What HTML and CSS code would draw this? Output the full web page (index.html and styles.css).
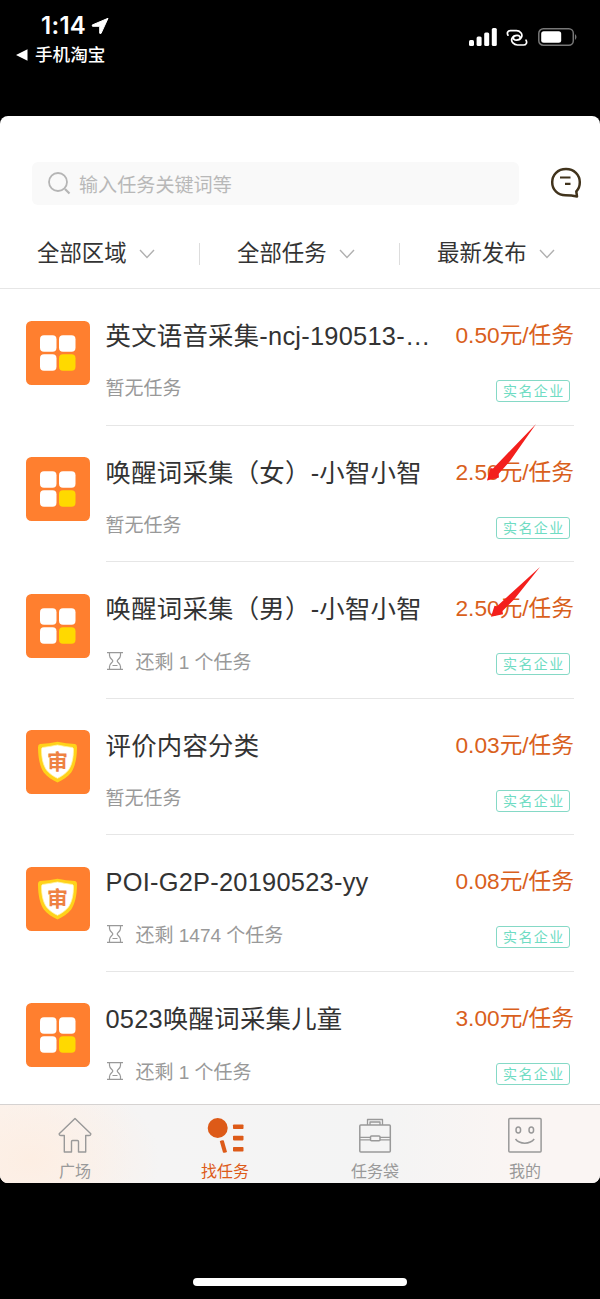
FILE: index.html
```html
<!DOCTYPE html>
<html lang="zh-CN">
<head>
<meta charset="utf-8">
<title>找任务</title>
<link rel="stylesheet" href="styles.css">
</head>
<body>
<svg class="sprite" width="0" height="0">
  <symbol id="i-grid" viewBox="0 0 64 64">
    <rect width="64" height="64" rx="5.5" fill="#ff7f2f"/>
    <rect x="14" y="14.3" width="16.5" height="16.5" rx="4" fill="#fff"/>
    <rect x="33" y="14.3" width="16.5" height="16.5" rx="4" fill="#fff"/>
    <rect x="14" y="33.3" width="16.5" height="16.5" rx="4" fill="#fff"/>
    <rect x="33" y="33.3" width="16.5" height="16.5" rx="4" fill="#ffd900"/>
  </symbol>
  <symbol id="i-shield" viewBox="0 0 64 64">
    <rect width="64" height="64" rx="5.5" fill="#ff7f2f"/>
    <path d="M14 14Q23 13.500 31.500 11.800Q40 13.500 49 14Q51.200 14.500 51 18C50.800 29 49 36.500 45.200 42.500C42 47 36.500 50 31.500 52.600C26.500 50 21 47 17.800 42.500C14 36.500 12.200 29 12 18Q11.800 14.500 14 14Z" fill="#ffd21a"/>
    <path d="M16.500 17.500Q24 16.500 31.500 15Q39 16.500 46.500 17.500Q47.500 17.800 47.500 20C47.300 29 45.800 35 42.500 40C39.700 43.800 35.500 46.300 31.500 48.300C27.500 46.300 23.300 43.800 20.500 40C17.200 35 15.700 29 15.500 20Q15.500 17.800 16.500 17.500Z" fill="#fff" stroke="#fff6a8" stroke-width=".8"/>
    <text x="31.500" y="38.500" text-anchor="middle" class="shield-text">审</text>
  </symbol>
  <symbol id="i-glass" viewBox="0 0 18 20">
    <path d="M1 1.700H17M1 18.300H17M3.500 2V4.500C3.500 7.500 6.800 8.500 6.800 10S3.500 12.500 3.500 15.500V18M14.500 2V4.500C14.500 7.500 11.200 8.500 11.200 10S14.500 12.500 14.500 15.500V18M6.500 14.500H11.500" fill="none" stroke="#999" stroke-width="1.200"/>
  </symbol>
  <symbol id="i-down" viewBox="0 0 16 10">
    <path d="M1 1L8 8.500L15 1" fill="none" stroke="#b0b0b0" stroke-width="1.400"/>
  </symbol>
  <symbol id="i-pointer" viewBox="0 0 52 60" preserveAspectRatio="none">
    <path d="M51 1L21 32L8 45.500L5.500 45L2 57.500L14 54.500L13.500 51L25 38Z" fill="#f31f1c"/>
  </symbol>
</svg>

<header class="status">
  <div class="status-left">
    <div class="clock"><span>1:14</span>
      <svg width="18" height="18" viewBox="0 0 18 18"><path d="M17 1.300L10 16.500L8.700 16.300V9.300H1.500L1.200 8Z" fill="#fff" stroke="#fff" stroke-width="1" stroke-linejoin="round"/></svg>
    </div>
    <div class="back">
      <svg width="12" height="12" viewBox="0 0 12 12"><path d="M0 6L11.500 .3V11.700Z" fill="#fff"/></svg>
      <span>手机淘宝</span>
    </div>
  </div>
  <div class="status-right">
    <svg width="28" height="18" viewBox="0 0 28 18" fill="#fff"><rect x="0" y="12" width="5" height="6" rx="1.500"/><rect x="7.600" y="8.500" width="5" height="9.500" rx="1.500"/><rect x="15.200" y="4.500" width="5" height="13.500" rx="1.500"/><rect x="22.800" y="0" width="5" height="18" rx="1.500"/></svg>
    <svg class="link" width="22" height="18" viewBox="0 0 22 18" fill="none" stroke="#fff" stroke-width="1.700" stroke-linecap="round"><path d="M2 6.200C.5 3.700 2 1.600 4.500 1.600H10.500C14 1.600 17 5 15.500 8.200C14.600 10.300 13 11.200 10.500 11.200C8.300 11.200 7 10 7.500 8.500"/><path d="M20 11.200C21.500 13.800 20 16 17.500 16H11.500C8 16 4.500 12.600 6 9.400C7 7.300 8.500 6.400 11 6.400C13.200 6.400 14.500 7.500 14 9"/></svg>
    <svg width="40" height="18" viewBox="0 0 40 18"><rect x=".8" y=".8" width="34.500" height="16.400" rx="4.500" fill="none" stroke="#777" stroke-width="1.500"/><rect x="3.200" y="3.200" width="20" height="11.600" rx="2.500" fill="#fff"/><path d="M37 6Q40 9 37 12Z" fill="#777"/></svg>
  </div>
</header>

<main class="app">
  <div class="search-row">
    <div class="search">
      <svg width="24" height="24" viewBox="0 0 24 24" fill="none" stroke="#b5b5b5" stroke-width="1.800"><circle cx="10" cy="10" r="9"/><path d="M17 17L21.500 21.500" stroke-width="2.200"/></svg>
      <span>输入任务关键词等</span>
    </div>
    <svg class="chat" width="32" height="32" viewBox="0 0 32 32" fill="none" stroke="#41331c" stroke-width="2.500" stroke-linejoin="round"><path d="M16 2C7.800 2 2.200 7.800 2.200 15.300C2.200 23 8 28.300 15.500 28.300C19 28.300 22.500 28.500 27 29.500L26.300 24.500C28.800 22 29.800 18.700 29.800 15.300C29.800 7.800 24 2 16 2Z"/><path d="M10 10.500H20.500M15 16.800H20.500" stroke-width="2.200"/></svg>
  </div>
  <div class="filters">
    <div class="filter">全部区域<svg width="16" height="10"><use href="#i-down"/></svg></div>
    <div class="filter">全部任务<svg width="16" height="10"><use href="#i-down"/></svg></div>
    <div class="filter">最新发布<svg width="16" height="10"><use href="#i-down"/></svg></div>
  </div>

  <div class="list">
    <div class="row">
      <svg class="icon" width="64" height="64"><use href="#i-grid"/></svg>
      <div class="body">
        <div class="line"><div class="title">英文语音采集-ncj-190513-…</div><div class="price">0.50元/任务</div></div>
        <div class="line"><div class="sub">暂无任务</div><div class="tag">实名企业</div></div>
      </div>
    </div>
    <div class="row">
      <svg class="icon" width="64" height="64"><use href="#i-grid"/></svg>
      <div class="body">
        <div class="line"><div class="title">唤醒词采集（女）-小智小智</div><div class="price">2.50元/任务</div></div>
        <div class="line"><div class="sub">暂无任务</div><div class="tag">实名企业</div></div>
      </div>
      <svg class="pointer pointer-a" width="52" height="60"><use href="#i-pointer"/></svg>
    </div>
    <div class="row">
      <svg class="icon" width="64" height="64"><use href="#i-grid"/></svg>
      <div class="body">
        <div class="line"><div class="title">唤醒词采集（男）-小智小智</div><div class="price">2.50元/任务</div></div>
        <div class="line"><div class="sub left"><svg width="18" height="20"><use href="#i-glass"/></svg>还剩 1 个任务</div><div class="tag">实名企业</div></div>
      </div>
      <svg class="pointer pointer-b" width="52" height="53"><use href="#i-pointer"/></svg>
    </div>
    <div class="row">
      <svg class="icon" width="64" height="64"><use href="#i-shield"/></svg>
      <div class="body">
        <div class="line"><div class="title">评价内容分类</div><div class="price">0.03元/任务</div></div>
        <div class="line"><div class="sub">暂无任务</div><div class="tag">实名企业</div></div>
      </div>
    </div>
    <div class="row">
      <svg class="icon" width="64" height="64"><use href="#i-shield"/></svg>
      <div class="body">
        <div class="line"><div class="title">POI-G2P-20190523-yy</div><div class="price">0.08元/任务</div></div>
        <div class="line"><div class="sub left"><svg width="18" height="20"><use href="#i-glass"/></svg>还剩 1474 个任务</div><div class="tag">实名企业</div></div>
      </div>
    </div>
    <div class="row">
      <svg class="icon" width="64" height="64"><use href="#i-grid"/></svg>
      <div class="body">
        <div class="line"><div class="title">0523唤醒词采集儿童</div><div class="price">3.00元/任务</div></div>
        <div class="line"><div class="sub left"><svg width="18" height="20"><use href="#i-glass"/></svg>还剩 1 个任务</div><div class="tag">实名企业</div></div>
      </div>
    </div>
  </div>

  <nav class="tabs">
    <div class="tab">
      <svg width="40" height="40" viewBox="0 0 40 40" fill="none" stroke="#999" stroke-width="1.400" stroke-linejoin="round"><path d="M20 3.500L4.200 18.700Q4 20.500 6 20.500H9.300V37H16.500V26.500Q16.500 25.500 17.500 25.500H22.500Q23.500 25.500 23.500 26.500V37H30.700V20.500H34Q36 20.500 35.800 18.700Z"/></svg>
      <span>广场</span>
    </div>
    <div class="tab active">
      <svg width="40" height="40" viewBox="0 0 40 40" fill="#dd5a18"><circle cx="12.700" cy="13" r="10"/><path d="M14.800 26.300Q16.500 25 18.800 25.500L22 37Q20 38.200 18 37.500Z"/><rect x="28" y="9.500" width="10.500" height="4.600" rx=".8"/><rect x="28" y="20.800" width="10.500" height="4.600" rx=".8"/><rect x="28" y="32" width="10.500" height="4.600" rx=".8"/></svg>
      <span>找任务</span>
    </div>
    <div class="tab">
      <svg width="40" height="40" viewBox="0 0 40 40" fill="none" stroke="#999" stroke-width="1.500" stroke-linejoin="round"><rect x="4.800" y="10" width="30.500" height="27" rx="1"/><path d="M12.500 10V4.500H27.500V10M15 10V7H25V10M5 22.300H15.500M25 22.300H35M5 24.800H15.500M25 24.800H35" stroke-width="1.300"/><rect x="15.500" y="21" width="9.500" height="4.800" rx="1" fill="#f5f4f4"/></svg>
      <span>任务袋</span>
    </div>
    <div class="tab">
      <svg width="40" height="40" viewBox="0 0 40 40" fill="none" stroke="#999" stroke-width="1.500"><rect x="3.800" y="3.500" width="32.300" height="33.500" rx="1"/><ellipse cx="13.300" cy="15" rx="2.300" ry="3"/><ellipse cx="26.300" cy="15" rx="2.300" ry="3"/><path d="M10.500 24C14.500 29.500 25 29.500 29.200 24"/></svg>
      <span>我的</span>
    </div>
  </nav>
</main>
<div class="home-bar"></div>
</body>
</html>
```

FILE: styles.css
```css
* { box-sizing: border-box; }
body {
  margin: 0;
  width: 600px;
  height: 1299px;
  display: flex;
  flex-direction: column;
  background: #000;
  font-family: "Liberation Sans", "Noto Sans CJK SC", sans-serif;
  color: #333;
  overflow: hidden;
}
svg { display: block; flex: none; }
.sprite { position: absolute; }
.status {
  height: 116px;
  display: flex;
  justify-content: space-between;
  color: #fff;
}
.status-left { padding: 10px 0 0 16px; }
.clock {
  display: flex;
  align-items: center;
  gap: 5px;
  padding-left: 25px;
  height: 31px;
  font: 600 24px/31px Inter, sans-serif;
}
.clock span { letter-spacing: .3px; }
.back {
  display: flex;
  align-items: center;
  gap: 7px;
  height: 28px;
  font-size: 17.6px;
  line-height: 28px;
  font-weight: 500;
}
.status-right {
  display: flex;
  align-items: flex-start;
  padding: 28px 22px 0 0;
}
.link { margin: 1px 10px 0 9px; }
.app {
  height: 1067px;
  display: flex;
  flex-direction: column;
  background: #fff;
  border-radius: 8px;
  overflow: hidden;
}
.search-row {
  display: flex;
  align-items: flex-start;
  padding: 46px 18px 0 32px;
}
.search {
  width: 487px;
  height: 43px;
  display: flex;
  align-items: center;
  gap: 7px;
  padding-left: 16px;
  background: #f9f9f9;
  border-radius: 6px;
  color: #b8b8b8;
  font-size: 19.1px;
  line-height: 43px;
}
.search span { padding-top: 3px; }
.chat { margin: 5px 0 0 31px; }
.filters {
  display: grid;
  grid-template-columns: repeat(3, 1fr);
  align-items: center;
  height: 84px;
  padding-top: 14px;
  border-bottom: 1px solid #e6e6e6;
  flex: none;
}
.filter {
  height: 22px;
  display: flex;
  align-items: center;
  gap: 12px;
  padding-left: 37px;
  border-right: 1px solid #ddd;
  font-size: 22.4px;
  line-height: 22px;
}
.filter:last-child { border-right: 0; }
.list { flex: 1; min-height: 0; overflow: hidden; }
.row {
  position: relative;
  display: flex;
  gap: 16px;
  height: 136.5px;
  padding: 0 26px 0 25.5px;
}
.icon { margin-top: 31.5px; }
.shield-text { font: 700 21px "Noto Sans CJK SC", sans-serif; fill: #ee8142; }
.body {
  flex: 1;
  min-width: 0;
  padding-top: 29px;
  border-bottom: 1px solid #e6e6e6;
}
.line { display: flex; justify-content: space-between; }
.title {
  height: 36px;
  font-size: 25.4px;
  letter-spacing: .25px;
  line-height: 36px;
  white-space: nowrap;
}
.price {
  font-size: 22.7px;
  line-height: 35px;
  color: #d9601c;
  white-space: nowrap;
}
.sub {
  display: flex;
  align-items: center;
  height: 28px;
  margin-top: 21px;
  font-size: 19px;
  line-height: 28px;
  color: #999;
}
.left { gap: 12px; margin-top: 22px; }
.left svg { margin: -4px 0 0 0; }
.tag {
  width: 74px;
  height: 22px;
  margin: 26px 4px 0 0;
  border: 1px solid #85d9c6;
  border-radius: 3px;
  padding-left: 6px;
  font-size: 14px;
  letter-spacing: 1.4px;
  line-height: 21px;
  color: #6fdcc3;
  white-space: nowrap;
}
.pointer { position: absolute; }
.pointer-a { left: 485px; top: -3px; }
.pointer-b { left: 489px; top: 4px; }
.tabs {
  height: 79px;
  flex: none;
  display: grid;
  grid-template-columns: repeat(4, 1fr);
  border-top: 1px solid #d5d2d1;
  background:
    radial-gradient(ellipse 130px 90px at 30px 55px, #fdeee3, rgba(253, 238, 227, 0)),
    linear-gradient(90deg, #fbf3ee 0, #f5f4f4 22%, #f4f4f4 65%, #faf5f3 85%, #faf5f3 100%);
}
.tab {
  display: flex;
  flex-direction: column;
  align-items: center;
  padding-top: 10px;
  color: #999;
  font-size: 16px;
  line-height: 22px;
}
.tab span { margin-top: 6px; }
.active { color: #dd5a18; }
.home-bar {
  width: 214px;
  height: 8px;
  margin: 95px auto 0;
  border-radius: 4px;
  background: #fff;
}
```
